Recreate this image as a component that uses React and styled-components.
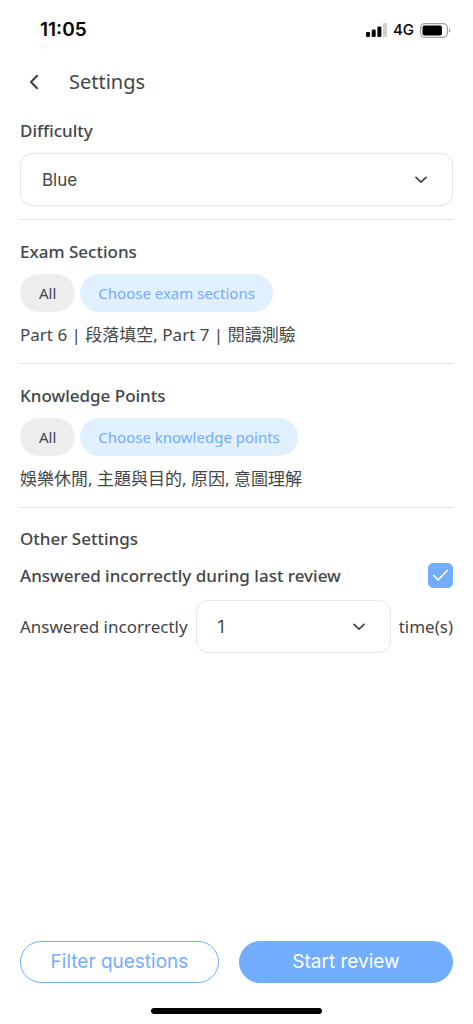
import React, { useState } from 'react';
import styled, { createGlobalStyle, css } from 'styled-components';

const GlobalStyle = createGlobalStyle`
  * {
    box-sizing: border-box;
  }
  body {
    margin: 0;
    background: #fff;
    color: #434548;
    font-family: 'Noto Sans', 'Noto Sans CJK TC', sans-serif;
    font-size: 17px;
    line-height: 24px;
  }
  button, select, input {
    margin: 0;
    font: inherit;
    color: inherit;
  }
`;

const Page = styled.div`
  display: flex;
  flex-direction: column;
  min-height: 100vh;
`;

const StatusBar = styled.div`
  display: flex;
  align-items: center;
  justify-content: space-between;
  height: 60px;
  padding: 0 22px 0 40px;
  color: #000;
  font-family: Inter, sans-serif;
`;

const Clock = styled.span`
  font-size: 19px;
  font-weight: 600;
`;

const StatusIcons = styled.div`
  display: flex;
  align-items: center;
  gap: 6px;
  font-size: 15px;
  font-weight: 500;
`;

const Header = styled.header`
  display: flex;
  align-items: center;
  gap: 22px;
  height: 44px;
  padding: 0 20px;
`;

const BackButton = styled.button`
  display: flex;
  align-items: center;
  justify-content: center;
  width: 27px;
  height: 32px;
  padding: 0;
  border: 0;
  background: none;
`;

const Title = styled.h1`
  margin: 0;
  font-size: 20px;
  font-weight: 400;
`;

const Main = styled.main`
  flex: 1;
  padding: 0 20px;
`;

const Section = styled.section`
  display: flex;
  flex-direction: column;
  gap: ${({ $gap }) => $gap || 10}px;
  padding: 20px 0 15px;
  border-bottom: 1px solid #e3e4e4;
  &:first-child {
    padding: 15px 0 13px;
  }
  &:last-child {
    padding-top: 19px;
    border-bottom: 0;
  }
`;

const headingText = css`
  margin: 0;
  font-size: 17px;
  font-weight: 500;
  line-height: 24px;
`;

const Heading = styled.h2`
  ${headingText}
`;

const Label = styled.label`
  ${({ $strong }) => $strong && headingText}
`;

const SelectBox = styled.div`
  position: relative;
  flex: 1;
  min-width: 0;
`;

const SelectInput = styled.select`
  display: block;
  width: 100%;
  height: 53px;
  padding: 0 50px 0 21px;
  border: 1px solid #e3e4e4;
  border-radius: 12px;
  appearance: none;
  background: #fff;
  font-family: Inter, sans-serif;
`;

const SelectArrow = styled.svg`
  position: absolute;
  top: 0;
  bottom: 0;
  right: 26px;
  margin: auto 0;
  pointer-events: none;
`;

const PillRow = styled.div`
  display: flex;
  gap: 5px;
`;

const Pill = styled.button`
  height: 38px;
  padding: 0 ${({ $tinted }) => ($tinted ? 18 : 19)}px;
  border: 0;
  border-radius: 19px;
  font-size: 15px;
  background: ${({ $tinted }) => ($tinted ? '#e1f0ff' : '#eceeed')};
  color: ${({ $tinted }) => ($tinted ? '#73adff' : '#434548')};
`;

const Summary = styled.p`
  margin: 0;
  line-height: 26px;
`;

const Row = styled.div`
  display: flex;
  align-items: center;
  justify-content: space-between;
  gap: 8px;
`;

const CheckBox = styled.span`
  position: relative;
  width: 25px;
  height: 25px;
`;

const CheckInput = styled.input`
  display: block;
  width: 100%;
  height: 100%;
  border: 1px solid #73adff;
  border-radius: 5px;
  appearance: none;
  &:checked {
    background: #73adff;
  }
`;

const CheckMark = styled.svg`
  position: absolute;
  inset: 0;
  pointer-events: none;
`;

const Footer = styled.footer`
  display: flex;
  gap: 20px;
  padding: 20px 20px 25px;
`;

const ActionButton = styled.button`
  flex: ${({ $primary }) => ($primary ? 14 : 13)} 1 0;
  height: 42px;
  padding: 0;
  border: 1px solid #73adff;
  border-radius: 21px;
  background: ${({ $primary }) => ($primary ? '#73adff' : '#fff')};
  color: ${({ $primary }) => ($primary ? '#fff' : '#73adff')};
  font-family: Inter, sans-serif;
  font-size: 19px;
`;

const HomeIndicator = styled.div`
  width: 36%;
  height: 6px;
  margin: 0 auto 10px;
  border-radius: 3px;
  background: #000;
`;

function SignalIcon() {
  return (
    <svg width="21" height="14" viewBox="0 0 21 14" aria-hidden="true">
      <rect x="0" y="9" width="4" height="5" rx="1.2" />
      <rect x="5.7" y="6.5" width="4" height="7.5" rx="1.2" />
      <rect x="11.4" y="3.5" width="4" height="10.5" rx="1.2" />
      <rect x="17" y="0" width="4" height="14" rx="1.2" fill="#d0d0d0" />
    </svg>
  );
}

function BatteryIcon() {
  return (
    <svg width="31" height="15" viewBox="0 0 31 15" aria-hidden="true">
      <rect x="0.6" y="0.6" width="26.8" height="13.8" rx="4.2" fill="none" stroke="#a0a0a0" strokeWidth="1.2" />
      <rect x="2.5" y="2.5" width="19.5" height="10" rx="2" />
      <path d="M29 5.2c1.8.7 1.8 3.9 0 4.6z" fill="#a0a0a0" />
    </svg>
  );
}

function Select({ id, options, value, onChange }) {
  return (
    <SelectBox>
      <SelectInput id={id} value={value} onChange={(e) => onChange(e.target.value)}>
        {options.map((d) => <option key={d} value={d}>{d}</option>)}
      </SelectInput>
      <SelectArrow width="12" height="8" viewBox="0 0 12 8" fill="none" aria-hidden="true">
        <path d="M1 1.4l5 4.8 5-4.8" stroke="#434548" strokeWidth="1.7" strokeLinecap="round" strokeLinejoin="round" />
      </SelectArrow>
    </SelectBox>
  );
}

function FilterSection({ title, action, summary }) {
  return (
    <Section>
      <Heading>{title}</Heading>
      <PillRow>
        <Pill type="button">All</Pill>
        <Pill type="button" $tinted>{action}</Pill>
      </PillRow>
      <Summary>{summary}</Summary>
    </Section>
  );
}

function App() {
  const [difficulty, setDifficulty] = useState('Blue');
  const [lastReview, setLastReview] = useState(true);
  const [times, setTimes] = useState('1');

  return (
    <Page>
      <GlobalStyle />
      <StatusBar>
        <Clock>11:05</Clock>
        <StatusIcons>
          <SignalIcon />
          <span>4G</span>
          <BatteryIcon />
        </StatusIcons>
      </StatusBar>
      <Header>
        <BackButton type="button" aria-label="Back">
          <svg width="10" height="16" viewBox="0 0 10 16" fill="none" aria-hidden="true">
            <path d="M8 1.8L2 8l6 6.2" stroke="#434548" strokeWidth="2.2" strokeLinecap="round" strokeLinejoin="round" />
          </svg>
        </BackButton>
        <Title>Settings</Title>
      </Header>
      <Main>
        <Section>
          <Label $strong htmlFor="difficulty">Difficulty</Label>
          <Select id="difficulty" options={['Blue', 'Green', 'Gold']} value={difficulty} onChange={setDifficulty} />
        </Section>
        <FilterSection
          title="Exam Sections"
          action="Choose exam sections"
          summary="Part 6 | 段落填空, Part 7 | 閱讀測驗"
        />
        <FilterSection
          title="Knowledge Points"
          action="Choose knowledge points"
          summary="娛樂休閒, 主題與目的, 原因, 意圖理解"
        />
        <Section $gap={12}>
          <Heading>Other Settings</Heading>
          <Row>
            <Label $strong htmlFor="last-review">Answered incorrectly during last review</Label>
            <CheckBox>
              <CheckInput
                id="last-review"
                type="checkbox"
                checked={lastReview}
                onChange={(e) => setLastReview(e.target.checked)}
              />
              {lastReview && (
                <CheckMark width="25" height="25" viewBox="0 0 25 25" fill="none" aria-hidden="true">
                  <path d="M5.5 12.3l4.6 4.6 9.2-9.4" stroke="#fff" strokeWidth="1.6" strokeLinecap="round" strokeLinejoin="round" />
                </CheckMark>
              )}
            </CheckBox>
          </Row>
          <Row>
            <Label htmlFor="times">Answered incorrectly</Label>
            <Select id="times" options={['1', '2', '3', '4', '5']} value={times} onChange={setTimes} />
            <span>time(s)</span>
          </Row>
        </Section>
      </Main>
      <Footer>
        <ActionButton type="button">Filter questions</ActionButton>
        <ActionButton type="button" $primary>Start review</ActionButton>
      </Footer>
      <HomeIndicator />
    </Page>
  );
}

export default App;
